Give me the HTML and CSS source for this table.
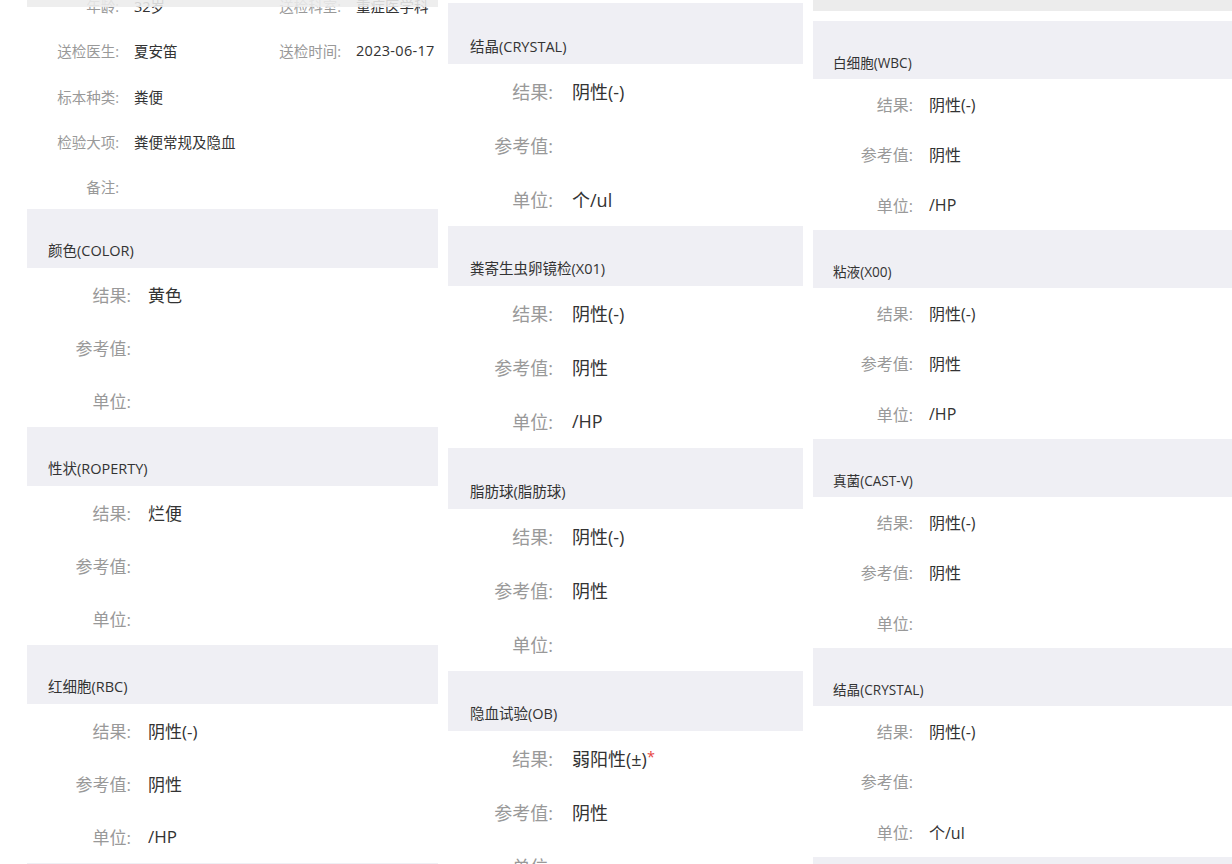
FILE: index.html
```html
<!DOCTYPE html>
<html lang="zh-CN">
<head>
<meta charset="utf-8">
<title>检验报告</title>
<link rel="stylesheet" href="styles.css">
</head>
<body>
<div class="board">
  <section class="panel p1">
    <div class="top-shade"></div>
    <div class="info">
      <div class="info-row">
        <div class="info-item"><span class="info-label">年龄:</span><span class="info-value">32岁</span></div>
        <div class="info-item"><span class="info-label">送检科室:</span><span class="info-value">重症医学科</span></div>
      </div>
      <div class="info-row">
        <div class="info-item"><span class="info-label">送检医生:</span><span class="info-value">夏安笛</span></div>
        <div class="info-item"><span class="info-label">送检时间:</span><span class="info-value num">2023-06-17</span></div>
      </div>
      <div class="info-row">
        <div class="info-item"><span class="info-label">标本种类:</span><span class="info-value">粪便</span></div>
      </div>
      <div class="info-row">
        <div class="info-item"><span class="info-label">检验大项:</span><span class="info-value">粪便常规及隐血</span></div>
      </div>
      <div class="info-row">
        <div class="info-item"><span class="info-label">备注:</span><span class="info-value"></span></div>
      </div>
    </div>

    <div class="item">
      <div class="item-head">颜色(COLOR)</div>
      <div class="row"><span class="label">结果:</span><span class="value">黄色</span></div>
      <div class="row"><span class="label">参考值:</span><span class="value"></span></div>
      <div class="row"><span class="label">单位:</span><span class="value"></span></div>
    </div>
    <div class="item">
      <div class="item-head">性状(ROPERTY)</div>
      <div class="row"><span class="label">结果:</span><span class="value">烂便</span></div>
      <div class="row"><span class="label">参考值:</span><span class="value"></span></div>
      <div class="row"><span class="label">单位:</span><span class="value"></span></div>
    </div>
    <div class="item">
      <div class="item-head">红细胞(RBC)</div>
      <div class="row"><span class="label">结果:</span><span class="value">阴性(-)</span></div>
      <div class="row"><span class="label">参考值:</span><span class="value">阴性</span></div>
      <div class="row"><span class="label">单位:</span><span class="value">/HP</span></div>
    </div>
    <div class="item">
      <div class="item-head"></div>
    </div>
  </section>

  <section class="panel p2">
    <div class="item">
      <div class="item-head">结晶(CRYSTAL)</div>
      <div class="row"><span class="label">结果:</span><span class="value">阴性(-)</span></div>
      <div class="row"><span class="label">参考值:</span><span class="value"></span></div>
      <div class="row"><span class="label">单位:</span><span class="value">个/ul</span></div>
    </div>
    <div class="item">
      <div class="item-head">粪寄生虫卵镜检(X01)</div>
      <div class="row"><span class="label">结果:</span><span class="value">阴性(-)</span></div>
      <div class="row"><span class="label">参考值:</span><span class="value">阴性</span></div>
      <div class="row"><span class="label">单位:</span><span class="value">/HP</span></div>
    </div>
    <div class="item">
      <div class="item-head">脂肪球(脂肪球)</div>
      <div class="row"><span class="label">结果:</span><span class="value">阴性(-)</span></div>
      <div class="row"><span class="label">参考值:</span><span class="value">阴性</span></div>
      <div class="row"><span class="label">单位:</span><span class="value"></span></div>
    </div>
    <div class="item">
      <div class="item-head">隐血试验(OB)</div>
      <div class="row"><span class="label">结果:</span><span class="value">弱阳性(±)<span class="flag">*</span></span></div>
      <div class="row"><span class="label">参考值:</span><span class="value">阴性</span></div>
      <div class="row"><span class="label">单位:</span><span class="value"></span></div>
    </div>
  </section>

  <section class="panel p3">
    <div class="top-band"></div>
    <div class="item">
      <div class="item-head">白细胞(WBC)</div>
      <div class="row"><span class="label">结果:</span><span class="value">阴性(-)</span></div>
      <div class="row"><span class="label">参考值:</span><span class="value">阴性</span></div>
      <div class="row"><span class="label">单位:</span><span class="value">/HP</span></div>
    </div>
    <div class="item">
      <div class="item-head">粘液(X00)</div>
      <div class="row"><span class="label">结果:</span><span class="value">阴性(-)</span></div>
      <div class="row"><span class="label">参考值:</span><span class="value">阴性</span></div>
      <div class="row"><span class="label">单位:</span><span class="value">/HP</span></div>
    </div>
    <div class="item">
      <div class="item-head">真菌(CAST-V)</div>
      <div class="row"><span class="label">结果:</span><span class="value">阴性(-)</span></div>
      <div class="row"><span class="label">参考值:</span><span class="value">阴性</span></div>
      <div class="row"><span class="label">单位:</span><span class="value"></span></div>
    </div>
    <div class="item">
      <div class="item-head">结晶(CRYSTAL)</div>
      <div class="row"><span class="label">结果:</span><span class="value">阴性(-)</span></div>
      <div class="row"><span class="label">参考值:</span><span class="value"></span></div>
      <div class="row"><span class="label">单位:</span><span class="value">个/ul</span></div>
    </div>
    <div class="item">
      <div class="item-head"></div>
    </div>
  </section>
</div>
</body>
</html>
```

FILE: styles.css
```css
* {
  box-sizing: border-box;
}

html, body {
  margin: 0;
  padding: 0;
  background: #ffffff;
}

body {
  font-family: "Open Sans", "Noto Sans CJK SC", sans-serif;
  color: #333333;
  width: 1232px;
  height: 864px;
  overflow: hidden;
}

.board {
  display: flex;
  gap: 10px;
  padding-left: 27px;
  height: 864px;
  align-items: flex-start;
}

.panel {
  position: relative;
  height: 864px;
  overflow: hidden;
  background: #ffffff;
  flex: none;
}

.p1 {
  width: 411px;
  --head-h: 59px;
  --head-fs: 14.5px;
  --head-pad: 21px;
  --head-bottom: 7px;
  --row-h: 53px;
  --fs: 17px;
  --label-w: 104px;
  --gap: 17px;
}

.p2 {
  width: 355px;
  padding-top: 3px;
  --head-h: 60.5px;
  --head-fs: 14.5px;
  --head-pad: 22px;
  --head-bottom: 7px;
  --row-h: 54px;
  --fs: 18px;
  --label-w: 105px;
  --gap: 19px;
}

.p3 {
  flex: 1 1 auto;
  --head-h: 58px;
  --head-fs: 13.6px;
  --head-pad: 20px;
  --head-bottom: 6px;
  --row-h: 50.33px;
  --fs: 16px;
  --label-w: 100px;
  --gap: 16px;
}

/* overlays */
.top-shade {
  position: absolute;
  top: 0;
  left: 0;
  right: 0;
  height: 7px;
  background: rgba(236, 236, 236, 0.88);
  z-index: 2;
}

.top-band {
  height: 11px;
  margin-bottom: 10px;
  background: #ececec;
}

/* patient info */
.info {
  margin-top: -17px;
}

.info-row {
  display: grid;
  grid-template-columns: 222px 1fr;
  height: 45.25px;
  align-items: center;
  font-size: 14.5px;
}

.info-item {
  display: flex;
  align-items: center;
  white-space: nowrap;
}

.info-label {
  width: 92px;
  text-align: right;
  color: #999999;
  flex: none;
}

.info-value {
  margin-left: 15px;
  color: #333333;
}

.num {
  letter-spacing: 0.3px;
}

/* result items */
.item-head {
  height: var(--head-h);
  background: #efeff4;
  display: flex;
  align-items: flex-end;
  padding-left: var(--head-pad);
  padding-bottom: var(--head-bottom);
  font-size: var(--head-fs);
  line-height: 20px;
  color: #333333;
}

.row {
  height: var(--row-h);
  display: flex;
  align-items: center;
  font-size: var(--fs);
  white-space: nowrap;
}

.label {
  width: var(--label-w);
  flex: none;
  text-align: right;
  color: #999999;
}

.value {
  margin-left: var(--gap);
  color: #333333;
}

.flag {
  color: #e64340;
  font-size: 0.8em;
  vertical-align: 0.25em;
}
```
